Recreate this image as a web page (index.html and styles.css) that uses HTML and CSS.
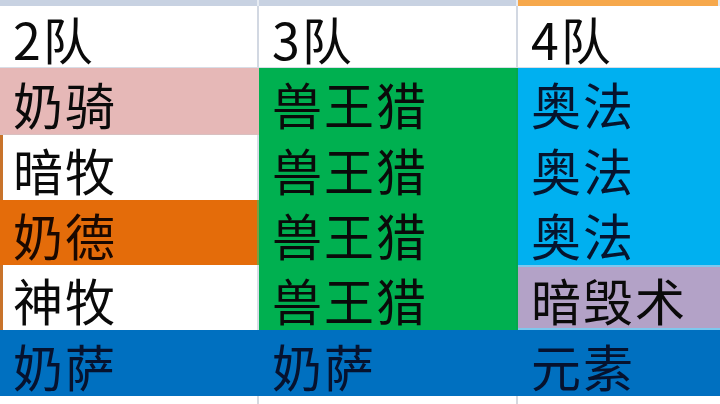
FILE: index.html
```html
<!DOCTYPE html>
<html lang="zh">
<head>
<meta charset="utf-8">
<link rel="stylesheet" href="styles.css">
</head>
<body>
<div class="sheet">
  <div class="cell band"></div>
  <div class="cell band"></div>
  <div class="cell band sel"></div>

  <div class="cell head r0">2队</div>
  <div class="cell head r0">3队</div>
  <div class="cell head r0 last">4队</div>

  <div class="cell pink r1">奶骑</div>
  <div class="cell green r1">兽王猎</div>
  <div class="cell cyan r1 last">奥法</div>

  <div class="cell white edge r2">暗牧</div>
  <div class="cell green r2">兽王猎</div>
  <div class="cell cyan r2 last">奥法</div>

  <div class="cell orange r3">奶德</div>
  <div class="cell green r3">兽王猎</div>
  <div class="cell cyan r3 last">奥法</div>

  <div class="cell white edge r4">神牧</div>
  <div class="cell green r4">兽王猎</div>
  <div class="cell purple r4 last">暗毁术</div>

  <div class="cell blue r5">奶萨</div>
  <div class="cell blue r5">奶萨</div>
  <div class="cell blue r5 last">元素</div>

  <div class="cell foot"></div>
  <div class="cell foot"></div>
  <div class="cell foot last"></div>
</div>
</body>
</html>
```

FILE: styles.css
```css
html, body {
  margin: 0;
  padding: 0;
  background: #ffffff;
}
body {
  width: 720px;
  height: 404px;
  overflow: hidden;
  font-family: "Noto Sans CJK SC", "Noto Sans", sans-serif;
}
.sheet {
  display: grid;
  grid-template-columns: 259px 259px 202px;
  grid-template-rows: 6px 62px 67px 65px 65px 65px 66px 8px;
  width: 720px;
  height: 404px;
}
.cell {
  box-sizing: border-box;
  display: flex;
  align-items: center;
  padding-left: 13px;
  padding-top: 4px;
  font-size: 50px;
  line-height: 1.05;
  letter-spacing: 2px;
  color: #0a0a0a;
  border-right: 2px solid #d2d8e2;
  white-space: nowrap;
}
.cell.last {
  border-right: none;
}
.band {
  background: #c8d2e2;
  border-right: 2px solid #e6ebf2;
  padding: 0;
}
.band.sel {
  background: #f6a84c;
}
.head {
  background: #ffffff;
  border-bottom: 1px solid #d8dde6;
}
.pink { background: #e6b8b7; border-right-color: #e6b8b7; }
.green { background: #00b050; border-right-color: #05a84c; }
.cyan { background: #00b0f0; color: #06142e; }
.white { background: #ffffff; border-right-color: #d8dde6; }
.edge { border-left: 3px solid #c8732a; padding-left: 10px; }
.orange { background: #e46c0a; border-right-color: #7aa040; color: #1a0800; }
.purple { background: #b3a2c7; border-top: 2px solid #7ec8ee; border-bottom: 2px solid #7ec8ee; }
.blue { background: #0070c0; border-right-color: #0070c0; color: #06122e; }
.r1 { border-bottom: 1px solid #d9c0c0; }
.r1.green, .r2.green, .r3.green { border-bottom: none; }
.r1.cyan, .r2.cyan { border-bottom: none; }
.foot { background: #ffffff; border-right: 2px solid #d4d9e0; padding: 0; }
```
